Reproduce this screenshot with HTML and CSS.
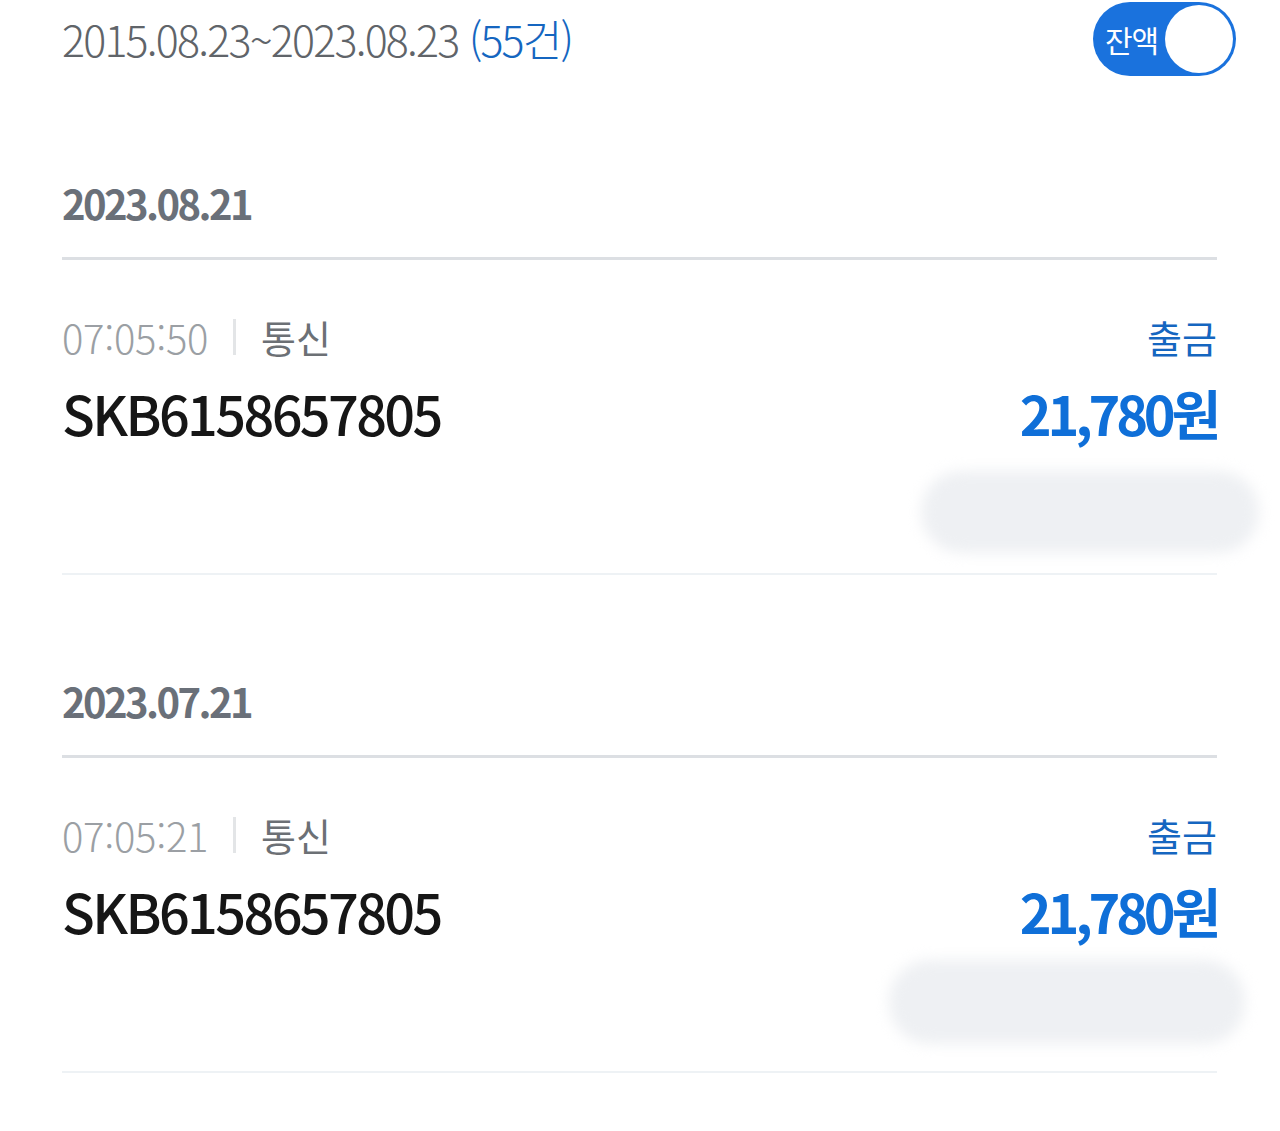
FILE: index.html
```html
<!DOCTYPE html>
<html lang="ko">
<head>
    <meta charset="UTF-8">
    <meta name="viewport" content="width=device-width, initial-scale=1.0">
    <title>거래내역</title>
<link rel="stylesheet" href="styles.css">
</head>
<body>

<div id="wrapper">

    <div class="summary">
        <p class="period">2015.08.23~2023.08.23 <span class="count">(55건)</span></p>
        <div class="toggle">
            <span class="toggle-label">잔액</span>
            <span class="toggle-knob"></span>
        </div>
    </div>

    <div class="day">
        <h3 class="day-title">2023.08.21</h3>
        <div class="item">
            <div class="item-meta">
                <span class="time">07:05:50</span>
                <span class="sep"></span>
                <span class="category">통신</span>
                <span class="type">출금</span>
            </div>
            <div class="item-main">
                <span class="name">SKB6158657805</span>
                <span class="amount">21,780원</span>
            </div>
            <div class="smudge"></div>
        </div>
    </div>

    <div class="day">
        <h3 class="day-title">2023.07.21</h3>
        <div class="item">
            <div class="item-meta">
                <span class="time">07:05:21</span>
                <span class="sep"></span>
                <span class="category">통신</span>
                <span class="type">출금</span>
            </div>
            <div class="item-main">
                <span class="name">SKB6158657805</span>
                <span class="amount">21,780원</span>
            </div>
            <div class="smudge smudge-wide"></div>
        </div>
    </div>

</div>

</body>
</html>
```

FILE: styles.css
```css
body {
    margin: 0;
    background-color: #FFF;
}
#wrapper {
    padding: 0 63px 0 62px;
    font-family: "Noto Sans CJK KR", "Noto Sans", sans-serif;
    color: #161616;
    overflow: hidden;
}

/* top summary */
.summary {
    display: flex;
    align-items: center;
    justify-content: space-between;
    height: 77px;
}
.period {
    margin: 0;
    font-size: 43px;
    font-weight: 300;
    line-height: 77px;
    letter-spacing: -1.8px;
    color: #606469;
}
.period .count {
    color: #1566c0;
}
.toggle {
    display: flex;
    align-items: center;
    justify-content: space-between;
    width: 143px;
    height: 74px;
    margin-right: -19px;
    padding: 0 3px 0 12px;
    box-sizing: border-box;
    border-radius: 37px;
    background-color: #1a72dd;
}
.toggle-label {
    font-size: 30px;
    line-height: 1;
    color: #FFF;
    letter-spacing: -1px;
}
.toggle-knob {
    width: 68px;
    height: 68px;
    border-radius: 50%;
    background-color: #FFF;
}

/* day groups */
.day {
    padding-top: 96px;
}
.day-title {
    margin: 0;
    padding-bottom: 24px;
    font-size: 40px;
    font-weight: 700;
    line-height: 60px;
    letter-spacing: -2.6px;
    color: #6a7079;
    border-bottom: 3px solid #dcdfe3;
}
.item {
    padding-top: 52px;
    border-bottom: 2px solid #eef2f5;
}
.item-meta {
    display: flex;
    align-items: center;
    height: 50px;
    line-height: 50px;
}
.time {
    font-size: 40px;
    font-weight: 300;
    letter-spacing: -0.3px;
    color: #9b9fa4;
}
.sep {
    width: 3px;
    height: 36px;
    margin: 0 25px;
    background-color: #e3e5e7;
}
.category {
    font-size: 38px;
    color: #6c7075;
}
.type {
    margin-left: auto;
    font-size: 38px;
    color: #1566c0;
}
.item-main {
    display: flex;
    justify-content: space-between;
    margin-top: 19px;
    height: 64px;
    line-height: 64px;
}
.name {
    font-size: 54px;
    font-weight: 500;
    letter-spacing: -2.6px;
    color: #161616;
}
.amount {
    font-size: 54px;
    font-weight: 700;
    letter-spacing: -4.2px;
    color: #0f6fd8;
}

/* redaction smear */
.smudge {
    width: 338px;
    height: 82px;
    margin: 26px -42px 20px auto;
    border-radius: 41px;
    background-color: #eef0f3;
    filter: blur(7px);
}
.smudge-wide {
    width: 356px;
    height: 84px;
    margin: 17px -28px 27px auto;
}
```
